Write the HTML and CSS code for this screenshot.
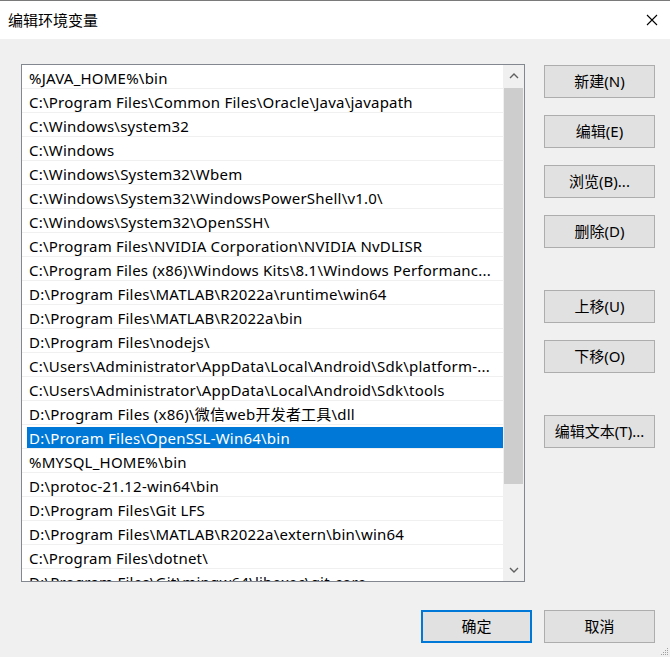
FILE: index.html
```html
<!DOCTYPE html>
<html lang="zh-CN">
<head>
<meta charset="utf-8">
<title>编辑环境变量</title>
<link rel="stylesheet" href="styles.css">
</head>
<body>
<div class="window">
  <div class="titlebar">
    <span class="title">编辑环境变量</span>
    <svg class="close" width="12" height="12" viewBox="0 0 12 12"><path d="M1 1L11 11M11 1L1 11" stroke="#000" stroke-width="1.1" fill="none"/></svg>
  </div>
  <div class="content">
    <div class="main">
      <div class="listbox">
        <div class="rows">
          <div class="row"><span class="cell">%JAVA_HOME%\bin</span></div>
          <div class="row"><span class="cell">C:\Program Files\Common Files\Oracle\Java\javapath</span></div>
          <div class="row"><span class="cell">C:\Windows\system32</span></div>
          <div class="row"><span class="cell">C:\Windows</span></div>
          <div class="row"><span class="cell">C:\Windows\System32\Wbem</span></div>
          <div class="row"><span class="cell">C:\Windows\System32\WindowsPowerShell\v1.0\</span></div>
          <div class="row"><span class="cell">C:\Windows\System32\OpenSSH\</span></div>
          <div class="row"><span class="cell">C:\Program Files\NVIDIA Corporation\NVIDIA NvDLISR</span></div>
          <div class="row"><span class="cell">C:\Program Files (x86)\Windows Kits\8.1\Windows Performanc...</span></div>
          <div class="row"><span class="cell">D:\Program Files\MATLAB\R2022a\runtime\win64</span></div>
          <div class="row"><span class="cell">D:\Program Files\MATLAB\R2022a\bin</span></div>
          <div class="row"><span class="cell">D:\Program Files\nodejs\</span></div>
          <div class="row"><span class="cell">C:\Users\Administrator\AppData\Local\Android\Sdk\platform-...</span></div>
          <div class="row"><span class="cell">C:\Users\Administrator\AppData\Local\Android\Sdk\tools</span></div>
          <div class="row"><span class="cell">D:\Program Files (x86)\微信web开发者工具\dll</span></div>
          <div class="row selected"><span class="cell">D:\Proram Files\OpenSSL-Win64\bin</span></div>
          <div class="row"><span class="cell">%MYSQL_HOME%\bin</span></div>
          <div class="row"><span class="cell">D:\protoc-21.12-win64\bin</span></div>
          <div class="row"><span class="cell">D:\Program Files\Git LFS</span></div>
          <div class="row"><span class="cell">D:\Program Files\MATLAB\R2022a\extern\bin\win64</span></div>
          <div class="row"><span class="cell">C:\Program Files\dotnet\</span></div>
          <div class="row"><span class="cell">D:\Program Files\Git\mingw64\libexec\git-core</span></div>
        </div>
        <div class="scrollbar">
          <div class="arrow up"><svg width="10" height="6" viewBox="0 0 10 6"><path d="M1 5L5 1L9 5" stroke="#606060" stroke-width="1.4" fill="none"/></svg></div>
          <div class="track"><div class="thumb"></div></div>
          <div class="arrow down"><svg width="10" height="6" viewBox="0 0 10 6"><path d="M1 1L5 5L9 1" stroke="#606060" stroke-width="1.4" fill="none"/></svg></div>
        </div>
      </div>
      <div class="side">
        <div class="group">
          <button class="btn">新建(N)</button>
          <button class="btn">编辑(E)</button>
          <button class="btn">浏览(B)...</button>
          <button class="btn">删除(D)</button>
        </div>
        <div class="group">
          <button class="btn">上移(U)</button>
          <button class="btn">下移(O)</button>
        </div>
        <div class="group">
          <button class="btn">编辑文本(T)...</button>
        </div>
      </div>
    </div>
    <div class="footer">
      <button class="btn default">确定</button>
      <button class="btn">取消</button>
    </div>
  </div>
  <div class="grip">
    <svg width="10" height="10" viewBox="0 0 10 10" fill="#a0a0a0"><rect x="8" y="2" width="1" height="1"/><rect x="6" y="4" width="1" height="1"/><rect x="8" y="4" width="1" height="1"/><rect x="4" y="6" width="1" height="1"/><rect x="6" y="6" width="1" height="1"/><rect x="8" y="6" width="1" height="1"/><rect x="2" y="8" width="1" height="1"/><rect x="4" y="8" width="1" height="1"/><rect x="6" y="8" width="1" height="1"/><rect x="8" y="8" width="1" height="1"/></svg>
  </div>
</div>
</body>
</html>
```

FILE: styles.css
```css
* { box-sizing: border-box; }
html, body { margin: 0; padding: 0; }
body {
  background: #f0f0f0;
  font-family: "Noto Sans", "Noto Sans CJK SC", sans-serif;
  font-size: 15px;
  color: #000;
}
.window {
  position: relative;
  width: 670px;
  height: 657px;
  border-top: 1px solid #7a7a7a;
  background: #f0f0f0;
  overflow: hidden;
}
.titlebar {
  height: 38px;
  background: #fff;
  display: flex;
  align-items: center;
  justify-content: space-between;
  padding: 0 12px 1px 8px;
}
.title { font-size: 15px; line-height: 20px; }
.close { display: block; }
.content { padding: 25px 15px 0 21px; }
.main { display: flex; align-items: flex-start; }
.listbox {
  width: 504px;
  height: 518px;
  border: 1px solid #828790;
  background: #fff;
  display: flex;
  overflow: hidden;
}
.rows { width: 481px; flex: none; overflow: hidden; }
.row {
  height: 24px;
  padding: 2px 0 0 5px;
  border-bottom: 1px solid #f0f0f0;
}
.cell {
  display: block;
  height: 21px;
  line-height: 23px;
  padding-left: 2px;
  letter-spacing: 0.22px;
  white-space: nowrap;
  overflow: hidden;
  text-overflow: ellipsis;
}
.selected .cell { background: #0078d7; color: #fff; }
.scrollbar {
  width: 21px;
  flex: none;
  background: #f0f0f0;
  display: flex;
  flex-direction: column;
}
.arrow {
  height: 22px;
  display: flex;
  align-items: center;
  justify-content: center;
  flex: none;
}
.track { flex: 1; }
.thumb {
  height: 396px;
  margin: 1px 1px 0 1px;
  background: #cdcdcd;
}
.side {
  margin-left: 19px;
  padding-top: 1px;
  display: flex;
  flex-direction: column;
  gap: 42px;
}
.group { display: flex; flex-direction: column; gap: 17px; }
.btn {
  width: 111px;
  height: 33px;
  margin: 0;
  padding: 0 0 2px 0;
  border: 1px solid #adadad;
  background: #e1e1e1;
  font-family: inherit;
  font-size: 15px;
  color: #000;
}
.btn.default { border: 2px solid #0078d7; }
.footer {
  display: flex;
  justify-content: flex-end;
  gap: 12px;
  padding-top: 28px;
}
.grip { position: absolute; right: 1px; bottom: 1px; width: 10px; height: 10px; }
.grip svg { display: block; }
```
